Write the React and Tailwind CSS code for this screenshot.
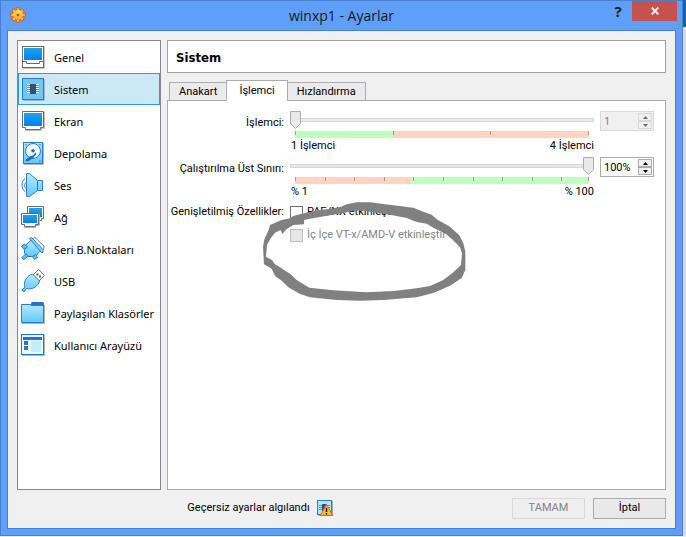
//SettingsDialog
import { useState } from "react";

const outline = "#2a78d8";

function Gradients() {
  return (
    <svg className="absolute w-0 h-0" aria-hidden="true">
      <defs>
        <linearGradient id="screen" x1="0" y1="0" x2="0" y2="1">
          <stop offset="0" stopColor="#1fa5e0" />
          <stop offset="1" stopColor="#0080f8" />
        </linearGradient>
        <linearGradient id="light" x1="0" y1="0" x2="0" y2="1">
          <stop offset="0" stopColor="#b4eaff" />
          <stop offset="1" stopColor="#5ecbfa" />
        </linearGradient>
        <linearGradient id="gear" x1="0" y1="0" x2="0" y2="1">
          <stop offset="0" stopColor="#ffe45a" />
          <stop offset="1" stopColor="#ffa030" />
        </linearGradient>
      </defs>
    </svg>
  );
}

function GeneralIcon() {
  return (
    <>
      <path d="M2 23.5H23.5V2" stroke="#c4c4c4" fill="none" />
      <rect x="1.5" y="1.5" width="21" height="21" fill="#fff" stroke="#6a6a6a" />
      <rect x="3" y="3" width="18" height="12" fill="url(#screen)" />
      <path d="M1.5 16.5H5.5V18.5H18.5V16.5H22.5" fill="none" stroke="#6a6a6a" />
    </>
  );
}

function SystemIcon() {
  return (
    <>
      <path d="M2 23.5H23.5V2" stroke="#9fb6c0" fill="none" />
      <rect x="1.5" y="1.5" width="21" height="21" fill="#6cc8fb" stroke={outline} />
      <path
        d="M6 7.5H18M6 9.5H18M6 11.5H18M6 13.5H18M6 15.5H18"
        stroke="#e0f4fc"
      />
      <path d="M6 8.5H18M6 10.5H18M6 12.5H18M6 14.5H18" stroke="#5790b8" />
      <rect x="9" y="7" width="6" height="10" fill="#34526f" />
    </>
  );
}

function DisplayIcon() {
  return (
    <>
      <path d="M4 21.5H20.5V19.5H23.5V3" stroke="#bdbdbd" fill="none" />
      <path
        d="M1.5 2.5H22.5V18.5H19.5V20.5H4.5V18.5H1.5Z"
        fill="#fff"
        stroke="#6a6a6a"
      />
      <rect x="3" y="4" width="18" height="13" fill="url(#screen)" />
    </>
  );
}

function StorageIcon() {
  return (
    <>
      <path d="M3 23.5H22.5V2" stroke="#b4b4b4" fill="none" />
      <rect x="2.5" y="1.5" width="19" height="21" fill="url(#light)" stroke={outline} />
      <circle cx="12" cy="10" r="7.5" fill="#f2fbff" stroke={outline} />
      <circle cx="12" cy="9.7" r="1.8" fill="#1f68c8" />
      <path d="M14.5 11.5L15.5 13L12 17L7 20.5L4 19.5L8.5 15.5L12 14.5Z" fill="#1f68c8" />
      <circle cx="5" cy="3.8" r="0.7" fill="#1f68c8" />
      <circle cx="19" cy="3.8" r="0.7" fill="#1f68c8" />
      <circle cx="19" cy="20.2" r="0.7" fill="#1f68c8" />
    </>
  );
}

function SoundIcon() {
  return (
    <>
      <path
        d="M5.5 0.5H8.5L16.5 7.5H21.5V17.5H16.5L8.5 23.5H5.5Z"
        fill="url(#light)"
        stroke={outline}
      />
      <path d="M16.5 8V17" stroke={outline} />
      <path d="M4 5.5C0 8 0 16 4 18.5M5 9.5C3 11 3 14 5 15.5" fill="none" stroke={outline} />
    </>
  );
}

function NetworkIcon() {
  return (
    <>
      <path
        d="M6.5 1.5H22.5V13.5H20.5V15.5H9.5L6.5 13.5Z"
        fill="#fff"
        stroke="#6a6a6a"
      />
      <rect x="8" y="3" width="13" height="9" fill="url(#screen)" />
      <path d="M3 22.5H14.5V20.5H18.5V9" fill="none" stroke="#b4b4b4" />
      <path
        d="M0.5 8.5H17.5V19.5H14.5V21.5H3.5V19.5H0.5Z"
        fill="#fff"
        stroke="#6a6a6a"
      />
      <rect x="2" y="10" width="14" height="8" fill="url(#screen)" />
    </>
  );
}

function SerialIcon() {
  return (
    <>
      <path d="M11 2L14 0.5L23 9V11.5L20 14Z" fill="#fff" stroke="#777" />
      <path
        d="M3.5 9.5L10 3L20 13L14 19.5H7L3.5 16Z"
        fill="url(#light)"
        stroke={outline}
      />
      <path d="M8.5 1.5L10.5 0.5L22 12.5V15.5H20.5Z" fill="#7ed7fc" stroke={outline} />
      <path
        d="M0.5 9.5L3.5 7L6.5 10L3 12.5ZM11.5 19.5L14.5 17.5L16.5 20.5L13.5 22.5Z"
        fill="#59c5fa"
        stroke={outline}
      />
      <path d="M5 16.5L0.8 20.8L2.8 22.8L7 19Z" fill="#59c5fa" stroke={outline} />
    </>
  );
}

function UsbIcon() {
  return (
    <>
      <path d="M12 6L17.5 0.5L23.5 6.5L18 12Z" fill="#fff" stroke="#777" />
      <path d="M15.5 4.5h2v2h-2zM18 6.5h2v2h-2z" fill="#555" />
      <path
        d="M11.5 5L18.5 12C18 16.5 11 21.5 5.5 19.5L2.8 23L0.8 21L4 18.5C1.5 13 6.5 6 11.5 5Z"
        fill="url(#light)"
        stroke={outline}
      />
    </>
  );
}

function FolderIcon() {
  return (
    <>
      <path d="M1 22.5H23.5V4" stroke="#b4b4b4" fill="none" />
      <path d="M9 4L11 1H22L23 2V6H8Z" fill="#2a70cc" />
      <path d="M0.5 3.5H9L11 4.5H22.5V21.5H0.5Z" fill="url(#light)" stroke={outline} />
    </>
  );
}

function InterfaceIcon() {
  return (
    <>
      <path d="M1 22.5H23.5V2" stroke="#b4b4b4" fill="none" />
      <rect x="0.5" y="1.5" width="22" height="20" fill="#eaf9ff" stroke="#1f76d6" />
      <rect x="2" y="4" width="19" height="3" fill="#2a70cc" />
      <rect x="3" y="8" width="4" height="4" fill="#2a70cc" />
      <rect x="3" y="13" width="4" height="4" fill="#2a70cc" />
      <rect x="10" y="8" width="10" height="11" fill="#c3ecfb" />
    </>
  );
}

function GearIcon() {
  return (
    <svg viewBox="0 0 16 16" className="w-4 h-4" aria-hidden="true">
      <circle
        cx="8"
        cy="8"
        r="6.3"
        fill="none"
        stroke="#d9601c"
        strokeWidth="3.2"
        pathLength="32"
        strokeDasharray="3 1"
        strokeDashoffset="1.5"
      />
      <circle cx="8" cy="8" r="6" fill="#d9601c" />
      <circle
        cx="8"
        cy="8"
        r="5.5"
        fill="none"
        stroke="#ffbc3c"
        strokeWidth="2.6"
        pathLength="32"
        strokeDasharray="2 2"
        strokeDashoffset="1"
      />
      <circle cx="8" cy="8" r="5" fill="url(#gear)" />
      <circle cx="8" cy="8" r="1.3" fill="#a5521c" />
    </svg>
  );
}

function WarningIcon() {
  return (
    <svg viewBox="0 0 17 17" className="w-[17px] h-[17px]" aria-hidden="true">
      <path d="M1 15.5H15.5V1" stroke="#aaa" fill="none" />
      <rect x="0.5" y="0.5" width="14" height="14" fill="#a6e8ff" stroke={outline} />
      <path d="M2 5.5H13M2 7.5H13M2 9.5H13" stroke="#5a93bd" />
      <rect x="5" y="4" width="5" height="8" fill="#34526f" />
      <path d="M9.5 4.5L15.7 15.5H3.3Z" fill="#ffb93c" stroke="#e0641c" strokeLinejoin="round" />
      <path d="M9.5 8V12M9.5 13V14.5" stroke="#111" strokeWidth="1.4" />
    </svg>
  );
}

const categories = [
  { name: "Genel", Icon: GeneralIcon },
  { name: "Sistem", Icon: SystemIcon },
  { name: "Ekran", Icon: DisplayIcon },
  { name: "Depolama", Icon: StorageIcon },
  { name: "Ses", Icon: SoundIcon },
  { name: "Ağ", Icon: NetworkIcon },
  { name: "Seri B.Noktaları", Icon: SerialIcon },
  { name: "USB", Icon: UsbIcon },
  { name: "Paylaşılan Klasörler", Icon: FolderIcon },
  { name: "Kullanıcı Arayüzü", Icon: InterfaceIcon },
];

const tabs = ["Anakart", "İşlemci", "Hızlandırma"];

function TitleBar() {
  return (
    <header className="relative h-[29px] shrink-0 flex items-center justify-center">
      <div className="absolute left-[9px] top-[6px]">
        <GearIcon />
      </div>
      <h1 className="font-['Open_Sans','Noto_Sans',sans-serif] text-[14px] leading-5 text-[#1a1a1a]">
        winxp1 - Ayarlar
      </h1>
      <div className="absolute right-[5px] top-0 flex">
        <button
          aria-label="Yardım"
          className="w-7 h-5 font-['Noto_Sans',sans-serif] text-[15px] leading-5 font-bold text-[#222]"
        >
          ?
        </button>
        <button
          aria-label="Kapat"
          className="w-[45px] h-5 bg-[#c75050] flex items-center justify-center"
        >
          <svg viewBox="0 0 8 8" className="w-2 h-2" aria-hidden="true">
            <path d="M0.7 0.7L7.3 7.3M7.3 0.7L0.7 7.3" stroke="#fff" strokeWidth="1.8" />
          </svg>
        </button>
      </div>
    </header>
  );
}

function Sidebar({ selected, onSelect }) {
  return (
    <nav className="w-[144px] shrink-0 bg-white border border-[#828790] font-['Noto_Sans',sans-serif]">
      {categories.map(({ name, Icon }) => (
        <button
          key={name}
          onClick={() => onSelect(name)}
          className={`w-full h-8 pl-[2px] flex items-center gap-[9px] border text-left whitespace-nowrap leading-4 ${
            selected === name
              ? "bg-[#cbe8f6] border-[#26a0da]"
              : "bg-white border-transparent"
          }`}
        >
          <svg viewBox="0 0 24 24" className="w-6 h-6 shrink-0" aria-hidden="true">
            <Icon />
          </svg>
          <span className="pt-px">{name}</span>
        </button>
      ))}
    </nav>
  );
}

function Slider({ id, label, min, max, step, value, onChange, split, lowFirst, minLabel, maxLabel }) {
  const marks = [];
  for (let v = min; v < max; v += step) marks.push(v);
  marks.push(max);
  const percent = (v) => ((v - min) / (max - min)) * 100;

  return (
    <div className="min-w-0">
      <div className="relative h-[18px] mt-px flex items-center">
        <div className="w-full h-1 bg-[#e7eaea] border border-[#d6d6d6]" />
        <div className="absolute inset-y-0 left-0 right-[11px]">
          <svg
            viewBox="0 0 11 18"
            className="absolute top-0 w-[11px] h-[18px]"
            style={{ left: `${percent(value)}%` }}
            aria-hidden="true"
          >
            <path d="M0.5 0.5H10.5V12.5L5.5 17.5L0.5 12.5Z" fill="#e9e9e9" stroke="#acacac" />
          </svg>
        </div>
        <input
          id={id}
          type="range"
          aria-label={label}
          min={min}
          max={max}
          value={value}
          onChange={(e) => onChange(Number(e.target.value))}
          className="absolute inset-0 w-full h-full m-0 opacity-0"
        />
      </div>
      <div className="mx-[5px] mt-[2px] h-[7px] flex relative">
        <div
          className={lowFirst ? "bg-[#ffd5c1]" : "bg-[#c1ffc1]"}
          style={{ width: `${split}%` }}
        />
        <div className={`flex-1 ${lowFirst ? "bg-[#c1ffc1]" : "bg-[#ffd5c1]"}`} />
        <div className="absolute inset-y-0 left-0 right-px">
          {marks.map((v) => (
            <span
              key={v}
              className="absolute top-0 w-px h-[4px] bg-[#9d9d8a]"
              style={{ left: `${percent(v)}%` }}
            />
          ))}
        </div>
      </div>
      <div className="flex justify-between pl-px leading-4">
        <span>{minLabel}</span>
        <span>{maxLabel}</span>
      </div>
    </div>
  );
}

function SpinBox({ label, value, suffix = "", disabled, onStep }) {
  return (
    <div
      className={`h-5 mt-px flex border p-px ${
        disabled ? "bg-[#f0f0f0] border-[#d9d9d9]" : "bg-white border-[#ababab]"
      }`}
    >
      <input
        type="text"
        readOnly
        aria-label={label}
        disabled={disabled}
        value={`${value}${suffix}`}
        className="min-w-0 flex-1 pl-[2px] pt-px bg-transparent leading-4 disabled:text-[#838383]"
      />
      <div className="w-[14px] flex flex-col">
        {[1, -1].map((dir) => (
          <button
            key={dir}
            disabled={disabled}
            aria-label={dir > 0 ? "Artır" : "Azalt"}
            onClick={() => onStep(dir)}
            className={`flex-1 flex items-center justify-center border bg-[#efefef] ${
              disabled ? "border-[#d9d9d9] text-[#6d6d6d]" : "border-[#acacac] text-black"
            }`}
          >
            <svg viewBox="0 0 5 3" className="w-[5px] h-[3px]" aria-hidden="true">
              <path d={dir > 0 ? "M0 3L2.5 0L5 3Z" : "M0 0L2.5 3L5 0Z"} fill="currentColor" />
            </svg>
          </button>
        ))}
      </div>
    </div>
  );
}

function Scribble() {
  return (
    <svg
      viewBox="0 0 690 360"
      className="absolute -left-10 -top-3 w-[230px] h-[120px] pointer-events-none"
      aria-hidden="true"
    >
      <path
        fillRule="evenodd"
        fill="#808080"
        d="M60 105L95 90L120 85L130 78L180 65L270 52L290 43L320 37L360 37L400 42L490 53L520 65L545 74L560 88L600 110L628 136L640 160L646 185V240L635 264L600 287L550 309L500 322L400 330L330 332L260 330L180 322L150 312L115 292L95 272L75 258L65 236L42 223L39 170L43 148L55 122Z
           M162 90V103L130 105L110 117L97 132L92 120L75 128L62 145L51 165L48 200L66 210L74 222L90 232L102 240L122 253L140 270L178 293L250 301L350 307L430 303L500 295L540 288L580 270L610 247L633 225L636 190L630 172L608 149L588 132L550 113L530 101L500 96L470 84L420 74L380 68L330 61L290 67L240 76L180 86Z"
      />
    </svg>
  );
}

function ProcessorPage() {
  const [cpus, setCpus] = useState(1);
  const [cap, setCap] = useState(100);
  const [pae, setPae] = useState(false);

  return (
    <div className="grid grid-cols-[107px_1fr_54px] gap-x-[6px] gap-y-[2px] pl-[9px] pr-[11px] pt-[9px]">
      <label htmlFor="cpus" className="pt-[5px] justify-self-end leading-4 whitespace-nowrap">
        İşlemci:
      </label>
      <Slider
        id="cpus"
        label="İşlemci"
        min={1}
        max={4}
        step={1}
        value={cpus}
        onChange={setCpus}
        split={33.4}
        minLabel="1 İşlemci"
        maxLabel="4 İşlemci"
      />
      <SpinBox label="İşlemci sayısı" value={cpus} disabled />

      <label htmlFor="cap" className="pt-[5px] justify-self-end leading-4 whitespace-nowrap">
        Çalıştırılma Üst Sınırı:
      </label>
      <Slider
        id="cap"
        label="Çalıştırılma Üst Sınırı"
        min={1}
        max={100}
        step={10}
        value={cap}
        onChange={setCap}
        split={39.4}
        lowFirst
        minLabel="% 1"
        maxLabel="% 100"
      />
      <SpinBox
        label="Üst sınır yüzdesi"
        value={cap}
        suffix="%"
        onStep={(dir) => setCap(Math.min(100, Math.max(1, cap + dir)))}
      />

      <span className="pt-[2px] justify-self-end leading-4 whitespace-nowrap">
        Genişletilmiş Özellikler:
      </span>
      <div className="relative col-span-2 pt-[2px] flex flex-col items-start gap-[7px]">
        <label className="flex items-center gap-1 leading-4">
          <input
            type="checkbox"
            checked={pae}
            onChange={(e) => setPae(e.target.checked)}
            className="appearance-none w-[13px] h-[13px] bg-white border border-[#707070] checked:bg-[#707070]"
          />
          PAE/NX etkinleştir
        </label>
        <label className="flex items-center gap-1 leading-4 text-[#838383]">
          <input
            type="checkbox"
            disabled
            className="appearance-none w-[13px] h-[13px] bg-[#e6e6e6] border border-[#bcbcbc]"
          />
          İç İçe VT-x/AMD-V etkinleştir
        </label>
        <Scribble />
      </div>
    </div>
  );
}

export default function App() {
  const [category, setCategory] = useState("Sistem");
  const [tab, setTab] = useState("İşlemci");

  return (
    <div className="h-screen flex bg-[#ececec] pb-px text-black text-[11px] font-['Roboto','Noto_Sans',sans-serif]">
      <Gradients />
      <div className="flex-1 min-w-0 flex flex-col bg-[#5f9ffa] border border-[#4a7fc9]">
        <TitleBar />
        <main className="flex-1 min-h-0 mx-[6px] mb-[6px] flex flex-col bg-[#f0f0f0] border border-[#3f82d8] pt-[9px] px-[9px]">
          <div className="flex-1 min-h-0 flex gap-[6px]">
            <Sidebar selected={category} onSelect={setCategory} />
            <section className="flex-1 min-w-0 flex flex-col">
              <h2 className="h-[33px] pt-px shrink-0 px-2 bg-white border border-[#a0a0a0] font-['DejaVu_Sans_Condensed','Noto_Sans',sans-serif] text-[13px] leading-8 font-bold">
                {category}
              </h2>
              <div className="flex items-end h-[21px] mt-[7px] px-[2px] relative z-10" role="tablist">
                {tabs.map((name) => (
                  <button
                    key={name}
                    role="tab"
                    aria-selected={tab === name}
                    onClick={() => setTab(name)}
                    className={`border border-[#acacac] pt-px leading-4 -ml-px first:ml-0 ${
                      tab === name
                        ? "h-[21px] px-3 bg-white border-b-white"
                        : "h-[19px] px-[9px] bg-[#ebebeb]"
                    }`}
                  >
                    {name}
                  </button>
                ))}
              </div>
              <div className="flex-1 min-h-0 -mt-px bg-white border border-[#acacac]">
                {tab === "İşlemci" && <ProcessorPage />}
              </div>
            </section>
          </div>
          <footer className="h-[38px] pb-[2px] shrink-0 flex items-center justify-end gap-2">
            <p className="flex-1 flex items-center justify-center gap-[7px] leading-4">
              Geçersiz ayarlar algılandı
              <WarningIcon />
            </p>
            <button disabled className="w-[73px] h-[21px] pt-px border border-[#d9d9d9] bg-[#efefef] text-[#838383]">
              TAMAM
            </button>
            <button className="w-[73px] h-[21px] pt-px border border-[#acacac] bg-[#e9e9e9]">
              İptal
            </button>
          </footer>
        </main>
      </div>
      <div className="w-[3px] shrink-0 bg-[#dcdcdc]">
        <div className="h-[27px] bg-[#0e67a4]" />
      </div>
    </div>
  );
}
